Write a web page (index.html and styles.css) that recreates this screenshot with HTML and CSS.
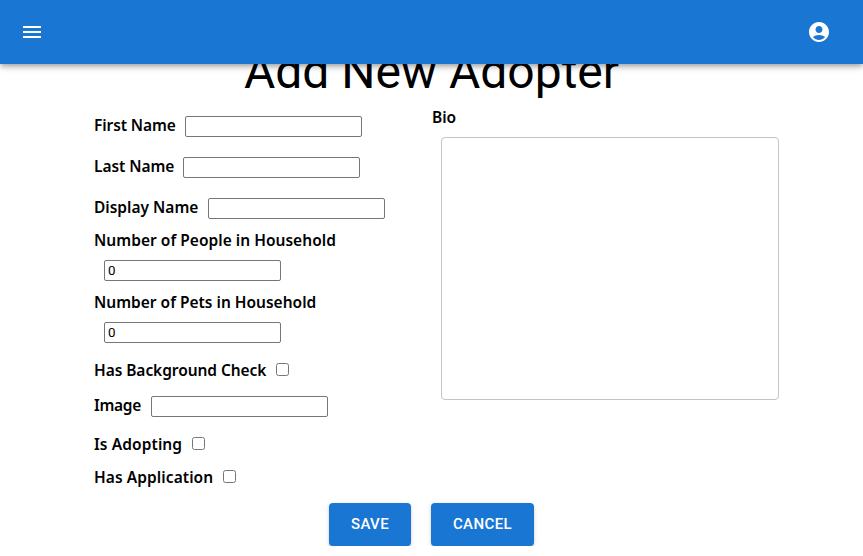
FILE: index.html
```html
<!DOCTYPE html>
<html lang="en">
<head>
<meta charset="utf-8">
<title>Add New Adopter</title>
<link rel="stylesheet" href="styles.css">
</head>
<body>
<header class="app-bar">
  <svg class="icon" viewBox="0 0 24 24"><path d="M3 18h18v-2H3v2zm0-5h18v-2H3v2zm0-7v2h18V6H3z"/></svg>
  <svg class="icon" viewBox="0 0 24 24"><path d="M12 2C6.480 2 2 6.480 2 12s4.480 10 10 10 10-4.480 10-10S17.520 2 12 2zm0 4c1.930 0 3.500 1.570 3.500 3.500S13.930 13 12 13s-3.500-1.570-3.500-3.500S10.070 6 12 6zm0 14c-2.030 0-4.430-.820-6.140-2.880C7.550 15.800 9.680 15 12 15s4.450.800 6.140 2.120C16.430 19.180 14.030 20 12 20z"/></svg>
</header>
<main>
  <h1 class="title">Add New Adopter</h1>
  <form>
    <div class="columns">
      <div class="fields">
        <div class="row"><label class="first" for="first">First Name</label><input id="first" type="text"></div>
        <div class="row"><label class="last" for="last">Last Name</label><input id="last" type="text"></div>
        <div class="row"><label class="display" for="display">Display Name</label><input id="display" type="text"></div>
        <div class="stack"><label class="people" for="people">Number of People in Household</label><input id="people" type="text" value="0"></div>
        <div class="stack"><label class="pets" for="pets">Number of Pets in Household</label><input id="pets" type="text" value="0"></div>
        <div class="row check"><label class="background" for="background">Has Background Check</label><input id="background" type="checkbox"></div>
        <div class="row"><label class="image" for="image">Image</label><input id="image" type="text"></div>
        <div class="row check"><label class="adopting" for="adopting">Is Adopting</label><input id="adopting" type="checkbox"></div>
        <div class="row check"><label class="application" for="application">Has Application</label><input id="application" type="checkbox"></div>
      </div>
      <div class="bio">
        <label for="bio">Bio</label>
        <textarea id="bio"></textarea>
      </div>
    </div>
    <div class="actions">
      <button class="save" type="button">SAVE</button>
      <button class="cancel" type="button">CANCEL</button>
    </div>
  </form>
</main>
</body>
</html>
```
FILE: styles.css
```css
* { box-sizing: border-box; }
html { overflow: hidden; }
body { margin: 0; background: #fff; color: #000; font-family: "Noto Sans", sans-serif; }
.app-bar {
  position: relative;
  z-index: 1;
  height: 64px;
  padding: 0 32px 0 20px;
  display: flex;
  align-items: center;
  justify-content: space-between;
  background: #1976d2;
  box-shadow: 0 2px 4px -1px rgba(0,0,0,.2), 0 4px 5px 0 rgba(0,0,0,.14), 0 1px 10px 0 rgba(0,0,0,.12);
}
.icon { width: 24px; height: 24px; fill: #fff; }
.title {
  margin: -20px 0 6px;
  height: 56px;
  font: 400 48px/56px Roboto, sans-serif;
  text-align: center;
}
.columns { display: flex; padding-left: 94px; }
.fields { width: 338px; }
.row { display: flex; align-items: center; height: 41px; }
.row.check { height: 33px; }
label {
  display: block;
  font-size: 15.5px;
  font-weight: 600;
  line-height: 23px;
  white-space: nowrap;
}
.row label { padding-bottom: 2px; }
.row.check label { padding: 2px 0 0; }
.first { width: 81px; letter-spacing: -.1px; }
.last { width: 79px; letter-spacing: -.05px; }
.display { width: 104px; }
.people { letter-spacing: .03px; }
.background { width: 172px; letter-spacing: -.06px; }
.image { width: 47px; letter-spacing: -.3px; }
.adopting { width: 88px; letter-spacing: .1px; }
.application { width: 119px; letter-spacing: .08px; }
input { margin: 0 0 0 10px; }
input[type="text"] {
  display: block;
  width: 177px;
  height: 21px;
  padding: 1px 3px;
  border: 1px solid #767676;
  border-radius: 2px;
  font: 13.333px Roboto, sans-serif;
}
input[type="checkbox"] { width: 13px; height: 13px; }
.stack { height: 62px; }
.stack input { margin-top: 8px; }
.bio textarea {
  display: block;
  width: 338px;
  height: 263px;
  margin: 8px 0 0 9px;
  border: 1px solid #c4c4c4;
  border-radius: 4px;
  resize: none;
}
.actions { display: flex; justify-content: center; gap: 20px; padding-top: 10px; }
button {
  height: 43px;
  padding: 0 0 2px;
  border: 0;
  border-radius: 4px;
  background: #1976d2;
  color: #fff;
  font: 500 15px/26px Roboto, sans-serif;
  letter-spacing: .4px;
  box-shadow: 0 3px 1px -2px rgba(0,0,0,.2), 0 2px 2px 0 rgba(0,0,0,.14), 0 1px 5px 0 rgba(0,0,0,.12);
}
.save { width: 82px; }
.cancel { width: 103px; }
```
